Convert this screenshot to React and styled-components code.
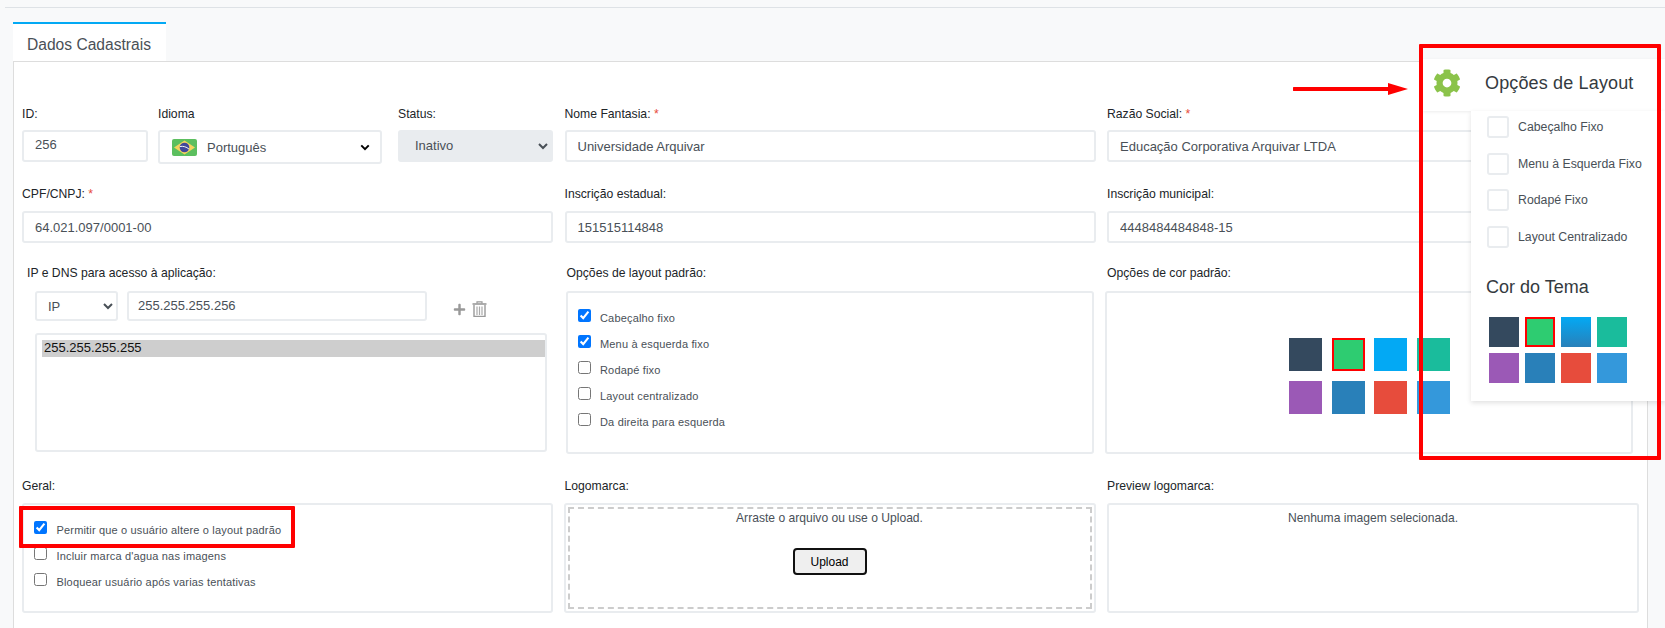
import React from "react";
import styled, { createGlobalStyle } from "styled-components";
import { FaCog, FaPlus } from "react-icons/fa";

const GlobalStyle = createGlobalStyle`
  html, body {
    margin: 0;
    height: 100%;
    background: #f8f9fa;
    font-family: "Liberation Sans", Arial, sans-serif;
  }
  #root {
    height: 100%;
  }
`;

const App = () => {
  return (
    <Page>
      <GlobalStyle />
      <TopRule />
      <Tab>Dados Cadastrais</Tab>
      <Panel>
        <Row $top={45}>
          <Triple>
            <Field>
              <Label $gap={9}>ID:</Label>
              <IdInput defaultValue="256" />
            </Field>
            <Field>
              <Label $gap={9}>Idioma</Label>
              <LangSelect>
                <BrazilFlag />
                <LangName>Português</LangName>
                <Chevron viewBox="0 0 12 8">
                  <path d="M1.5 1.5 6 6l4.5-4.5" fill="none" stroke="#000" strokeWidth="2.4" />
                </Chevron>
              </LangSelect>
            </Field>
            <Field>
              <Label $gap={9}>Status:</Label>
              <Select disabled defaultValue="Inativo">
                <option>Inativo</option>
                <option>Ativo</option>
              </Select>
            </Field>
          </Triple>
          <Field>
            <Label $gap={9}>
              Nome Fantasia: <Required>*</Required>
            </Label>
            <Input defaultValue="Universidade Arquivar" />
          </Field>
          <Field>
            <Label $gap={9}>
              Razão Social: <Required>*</Required>
            </Label>
            <Input defaultValue="Educação Corporativa Arquivar LTDA" />
          </Field>
        </Row>

        <Row $top={23}>
          <Field>
            <Label>
              CPF/CNPJ: <Required>*</Required>
            </Label>
            <Input defaultValue="64.021.097/0001-00" />
          </Field>
          <Field>
            <Label>Inscrição estadual:</Label>
            <Input defaultValue="151515114848" />
          </Field>
          <Field>
            <Label>Inscrição municipal:</Label>
            <Input defaultValue="4448484484848-15" />
          </Field>
        </Row>

        <Row $top={23}>
          <Field>
            <Label $indent={5} $gap={11}>IP e DNS para acesso à aplicação:</Label>
            <IpLine>
              <IpSelect defaultValue="IP">
                <option>IP</option>
                <option>DNS</option>
              </IpSelect>
              <IpInput defaultValue="255.255.255.256" />
              <IpActions>
                <FaPlus size={13} />
                <TrashIcon />
              </IpActions>
            </IpLine>
            <IpList multiple size={6} defaultValue={["255.255.255.255"]}>
              <option>255.255.255.255</option>
            </IpList>
          </Field>
          <Field>
            <Label $indent={2} $gap={11}>Opções de layout padrão:</Label>
            <LayoutChecks>
              <Check label="Cabeçalho fixo" checked />
              <Check label="Menu à esquerda fixo" checked />
              <Check label="Rodapé fixo" />
              <Check label="Layout centralizado" />
              <Check label="Da direita para esquerda" />
            </LayoutChecks>
          </Field>
          <Field>
            <Label $gap={11}>Opções de cor padrão:</Label>
            <ColorBox>
              <ColorGrid>
                {defaultColors.map((c, i) => (
                  <ColorSwatch key={c} $color={c} $active={i === 1} />
                ))}
              </ColorGrid>
            </ColorBox>
          </Field>
        </Row>

        <Row $top={25}>
          <Field>
            <Label>Geral:</Label>
            <GeneralChecks>
              <Check label="Permitir que o usuário altere o layout padrão" checked />
              <Check label="Incluir marca d'agua nas imagens" />
              <Check label="Bloquear usuário após varias tentativas" />
            </GeneralChecks>
          </Field>
          <Field>
            <Label>Logomarca:</Label>
            <DropOuter>
              <DropZone>
                <HelpText>Arraste o arquivo ou use o Upload.</HelpText>
                <UploadButton>Upload</UploadButton>
              </DropZone>
            </DropOuter>
          </Field>
          <Field>
            <Label>Preview logomarca:</Label>
            <PreviewBox>
              <HelpText>Nenhuma imagem selecionada.</HelpText>
            </PreviewBox>
          </Field>
        </Row>
      </Panel>

      <Settings>
        <SettingsHeader>
          <FaCog size={28} color="#8bc34a" />
          <SettingsTitle>Opções de Layout</SettingsTitle>
        </SettingsHeader>
        <SettingsBody>
          <OptionList>
            {layoutOptions.map((o) => (
              <Option key={o}>
                <OptionBox type="checkbox" />
                {o}
              </Option>
            ))}
          </OptionList>
          <ThemeTitle>Cor do Tema</ThemeTitle>
          <ThemeGrid>
            {themeColors.map((c, i) => (
              <ThemeSwatch key={i} $color={c} $active={i === 1} />
            ))}
          </ThemeGrid>
        </SettingsBody>
      </Settings>

      <RedFrame $left={1419} $top={44} $width={242} $height={416} />
      <RedFrame $left={19} $top={506} $width={276} $height={42} />
      <Arrow viewBox="0 0 116 14">
        <path d="M1 7h96" stroke="#f00" strokeWidth="4" strokeLinecap="round" />
        <path d="M95 1l20 6-20 6z" fill="#f00" />
      </Arrow>
    </Page>
  );
};

const Check = ({ label, checked }) => (
  <CheckRow>
    <CheckInput type="checkbox" defaultChecked={checked} />
    <CheckText>{label}</CheckText>
  </CheckRow>
);

const BrazilFlag = () => (
  <Flag viewBox="0 0 25 17">
    <rect width="25" height="17" rx="2" fill="#5cbf5f" />
    <path d="M12.5 1.5 23 8.5l-10.5 7L2 8.5z" fill="#f4d35e" />
    <circle cx="12.5" cy="8.5" r="4.8" fill="#41479b" />
    <path d="M8 7.5c3-.6 6.5.3 9 2.6" fill="none" stroke="#f5f5f5" strokeWidth="1" />
  </Flag>
);

const TrashIcon = () => (
  <TrashSvg viewBox="0 0 15 16">
    <path d="M5 2.5V.8h5v1.7" fill="none" stroke="#999" strokeWidth="1.2" />
    <rect x="0.5" y="2.2" width="14" height="1.6" fill="#999" />
    <path d="M2 4v11.4h11V4" fill="none" stroke="#999" strokeWidth="1.4" />
    <path d="M5 5.5v8.5M7.5 5.5v8.5M10 5.5v8.5" stroke="#aaa" strokeWidth="1.2" />
  </TrashSvg>
);

const defaultColors = ["#34495e", "#2ecc71", "#03a9f4", "#1abc9c", "#9b59b6", "#2980b9", "#e74c3c", "#3498db"];
const themeColors = [
  "#34495e",
  "#2ecc71",
  "linear-gradient(#03a9f4, #2980b9)",
  "#1abc9c",
  "#9b59b6",
  "#2980b9",
  "#e74c3c",
  "#3498db",
];
const layoutOptions = ["Cabeçalho Fixo", "Menu à Esquerda Fixo", "Rodapé Fixo", "Layout Centralizado"];

export default App;

const Page = styled.div`
  position: relative;
  height: 100vh;
  display: flex;
  flex-direction: column;
  overflow: hidden;
`;

const TopRule = styled.div`
  height: 1px;
  margin: 7px 0 14px 5px;
  background: #dee2e6;
`;

const Tab = styled.div`
  width: 153px;
  height: 39px;
  margin-left: 13px;
  padding-left: 14px;
  box-sizing: border-box;
  border-top: 2px solid #03a9f4;
  background: #fff;
  color: #495057;
  font-size: 15.6px;
  line-height: 41px;
`;

const Panel = styled.div`
  flex: 1;
  width: 1635px;
  margin-left: 13px;
  padding-left: 8px;
  box-sizing: border-box;
  background: #fff;
  border: 1px solid #ddd;
  border-bottom: none;
`;

const Row = styled.div`
  display: grid;
  grid-template-columns: 531px 531px 526px;
  column-gap: 11.5px;
  margin-top: ${(p) => p.$top}px;
`;

const Triple = styled.div`
  display: grid;
  grid-template-columns: 125.5px 224px 1fr;
  column-gap: 10.5px;
  align-items: start;
  & > :nth-child(3) {
    margin-left: 5.5px;
  }
`;

const Field = styled.div`
  min-width: 0;
`;

const Label = styled.div`
  height: 14px;
  margin: 0 0 ${(p) => p.$gap || 10}px ${(p) => p.$indent || 0}px;
  color: #212529;
  font-size: 12.2px;
  line-height: 14px;
`;

const Required = styled.span`
  color: #e74c3c;
`;

const Input = styled.input`
  display: block;
  width: 100%;
  height: 32px;
  padding: 0 11px;
  box-sizing: border-box;
  background: #fff;
  border: 2px solid #e9ecef;
  border-radius: 3px;
  color: #495057;
  font-family: inherit;
  font-size: 13px;
`;

const IdInput = styled(Input)`
  padding-bottom: 3px;
`;

const Select = styled.select`
  display: block;
  width: 100%;
  height: 32px;
  padding: 0 11px 2px;
  box-sizing: border-box;
  background: #e9ecef;
  border: 2px solid #e9ecef;
  border-radius: 3px;
  color: #495057;
  font-family: inherit;
  font-size: 13px;
  opacity: 1;
`;

const LangSelect = styled.div`
  display: flex;
  align-items: center;
  height: 34px;
  padding: 0 10px 0 12px;
  box-sizing: border-box;
  background: #fff;
  border: 2px solid #e9ecef;
  border-radius: 3px;
`;

const Flag = styled.svg`
  width: 25px;
  height: 17px;
  margin-top: 1px;
`;

const LangName = styled.span`
  flex: 1;
  margin: 1px 0 0 10px;
  color: #495057;
  font-size: 13px;
`;

const Chevron = styled.svg`
  width: 10px;
  height: 7px;
`;

const IpLine = styled.div`
  display: flex;
  align-items: flex-start;
  margin: 0 0 12px 13px;
`;

const IpSelect = styled(Select)`
  width: 83px;
  height: 30px;
  margin-right: 9px;
  padding: 0 7px;
  background: #fff;
`;

const IpInput = styled(Input)`
  width: 300px;
  height: 30px;
  margin-right: 26px;
  padding: 0 9px 2px;
`;

const IpActions = styled.div`
  display: flex;
  align-items: center;
  gap: 6px;
  margin-top: 10px;
  color: #999;
`;

const TrashSvg = styled.svg`
  width: 15px;
  height: 16px;
`;

const IpList = styled.select`
  display: block;
  width: 512px;
  height: 119px;
  margin-left: 13px;
  padding: 5px 0 0 5px;
  box-sizing: border-box;
  background: #fff;
  border: 2px solid #e9ecef;
  border-radius: 3px;
  color: #212529;
  font-family: inherit;
  font-size: 13px;
  outline: none;
`;

const LayoutChecks = styled.div`
  height: 163px;
  margin: 0 2px 0 1px;
  padding: 16px 0 0 10px;
  box-sizing: border-box;
  background: #fff;
  border: 2px solid #e9ecef;
  border-radius: 3px;
`;

const GeneralChecks = styled(LayoutChecks)`
  height: 110px;
  margin: 0;
  padding-top: 16px;
`;

const CheckRow = styled.label`
  display: flex;
  align-items: flex-start;
  height: 26px;
`;

const CheckInput = styled.input`
  width: 13px;
  height: 13px;
  margin: 0 9.5px 0 0;
`;

const CheckText = styled.span`
  margin-top: 2px;
  color: #495057;
  font-size: 11px;
  line-height: 14px;
  letter-spacing: 0.17px;
`;

const ColorBox = styled.div`
  height: 163px;
  width: 528px;
  margin-left: -2px;
  padding: 45px 0 0 182px;
  box-sizing: border-box;
  background: #fff;
  border: 2px solid #e9ecef;
  border-radius: 3px;
`;

const ColorGrid = styled.div`
  display: grid;
  grid-template-columns: repeat(4, 33px);
  grid-auto-rows: 33px;
  gap: 9.5px;
`;

const ColorSwatch = styled.div`
  background: ${(p) => p.$color};
  box-sizing: border-box;
  border: ${(p) => (p.$active ? "2px solid #f00" : "none")};
`;

const DropOuter = styled.div`
  height: 110px;
  margin-left: -1px;
  padding: 2px;
  box-sizing: border-box;
  background: #fff;
  border: 2px solid #e9ecef;
  border-radius: 3px;
`;

const DropZone = styled.div`
  height: 100%;
  box-sizing: border-box;
  border: 2px dashed #ccc;
  text-align: center;
`;

const HelpText = styled.div`
  margin-top: 1px;
  color: #495057;
  font-size: 12.1px;
  line-height: 16px;
  text-align: center;
`;

const UploadButton = styled.button`
  display: block;
  width: 74px;
  height: 27px;
  margin: 22px auto 0;
  padding: 0;
  background: #efefef;
  border: 2px solid #111;
  border-radius: 4px;
  color: #000;
  font-family: inherit;
  font-size: 12px;
`;

const PreviewBox = styled.div`
  height: 110px;
  width: 532px;
  padding-top: 4px;
  box-sizing: border-box;
  background: #fff;
  border: 2px solid #e9ecef;
  border-radius: 3px;
`;

const Settings = styled.div`
  position: absolute;
  top: 59px;
  right: 0;
  width: 242px;
`;

const SettingsHeader = styled.div`
  display: flex;
  align-items: center;
  gap: 24px;
  height: 52px;
  padding: 0 0 4px 10px;
  box-sizing: border-box;
  background: #fff;
  box-shadow: 0 1px 3px rgba(0, 0, 0, 0.08);
`;

const SettingsTitle = styled.div`
  color: #343a40;
  font-size: 18px;
  letter-spacing: 0.15px;
`;

const SettingsBody = styled.div`
  position: relative;
  margin-left: 48px;
  padding: 5px 0 18px 16px;
  background: #fff;
  box-shadow: 0 2px 5px rgba(0, 0, 0, 0.12);
`;

const OptionList = styled.div`
  display: flex;
  flex-direction: column;
  gap: 14.5px;
`;

const Option = styled.label`
  display: flex;
  align-items: center;
  gap: 9px;
  color: #495057;
  font-size: 12.3px;
`;

const OptionBox = styled.input`
  appearance: none;
  width: 22px;
  height: 22px;
  margin: 0;
  background: #fff;
  border: 2px solid #e9ecef;
  border-radius: 3px;
`;

const ThemeTitle = styled.div`
  margin: 29px 0 0 -1px;
  color: #343a40;
  font-size: 18px;
  line-height: 20px;
`;

const ThemeGrid = styled.div`
  display: grid;
  grid-template-columns: repeat(4, 30px);
  grid-auto-rows: 30px;
  gap: 6px;
  margin: 20px 0 0 2px;
`;

const ThemeSwatch = styled.div`
  background: ${(p) => p.$color};
  box-sizing: border-box;
  border: ${(p) => (p.$active ? "2px solid #f00" : "none")};
`;

const RedFrame = styled.div`
  position: absolute;
  left: ${(p) => p.$left}px;
  top: ${(p) => p.$top}px;
  width: ${(p) => p.$width}px;
  height: ${(p) => p.$height}px;
  box-sizing: border-box;
  border: 4px solid #f00;
  border-radius: 1px;
  pointer-events: none;
`;

const Arrow = styled.svg`
  position: absolute;
  left: 1293px;
  top: 82px;
  width: 116px;
  height: 14px;
`;
